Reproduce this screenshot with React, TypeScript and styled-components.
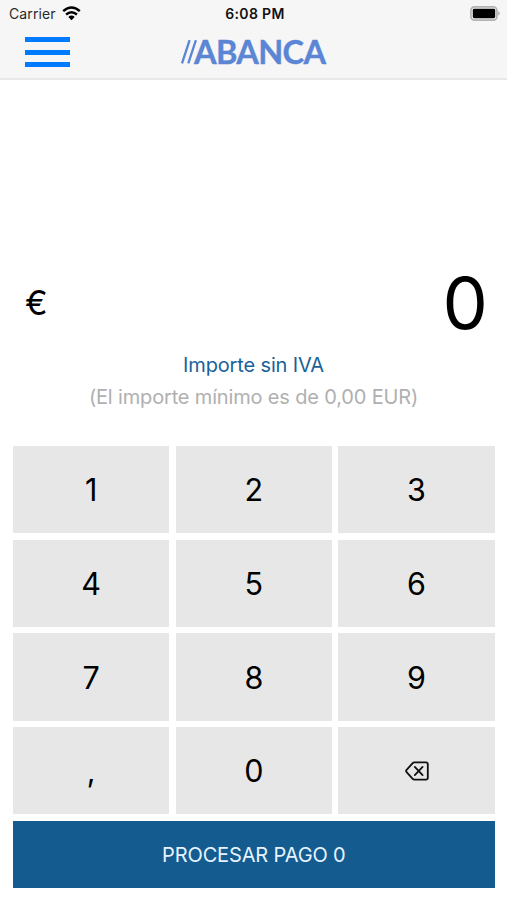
import React from "react";
import styled, { createGlobalStyle } from "styled-components";

const GlobalStyle = createGlobalStyle`
  * { box-sizing: border-box; }
  body { margin: 0; background: #fff; }
  button { font: inherit; border: 0; padding: 0; }
`;

const Screen = styled.main`
  width: 507px;
  height: 900px;
  display: flex;
  flex-direction: column;
  background: #fff;
  color: #000;
  font-family: Inter, "Liberation Sans", sans-serif;
`;

const Header = styled.header`
  height: 80px;
  background: #f6f6f6;
  border-bottom: 2px solid #e8e8e8;
`;

const StatusBar = styled.div`
  height: 27px;
  display: grid;
  grid-template-columns: 1fr auto 1fr;
  align-items: center;
  padding: 0 6px 0 9px;
`;

const Carrier = styled.div`
  display: flex;
  align-items: center;
  gap: 6px;
  font-size: 14px;
  letter-spacing: 0.12px;
  color: #2a2a2a;
`;

const Clock = styled.time`
  font-size: 14px;
  font-weight: 600;
  letter-spacing: 0.35px;
  color: #111;
`;

const BatterySlot = styled.div`
  display: flex;
  justify-content: flex-end;
`;

const NavBar = styled.div`
  height: 51px;
  display: grid;
  grid-template-columns: 1fr auto 1fr;
  align-items: start;
  padding: 10px 25px 0;
`;

const MenuButton = styled.button`
  width: 45px;
  height: 30px;
  display: flex;
  flex-direction: column;
  justify-content: space-between;
  background: none;
`;

const MenuLine = styled.span`
  height: 5px;
  background: #007aff;
`;

const Amount = styled.section`
  height: 270px;
  display: flex;
  align-items: flex-end;
  justify-content: space-between;
  padding: 0 19px 0 25px;
`;

const Currency = styled.span`
  font-size: 34px;
  line-height: 40px;
  margin-bottom: 27px;
`;

const Value = styled.output`
  font-size: 72px;
  line-height: 86px;
  margin-bottom: 4px;
`;

const Notes = styled.section`
  height: 96px;
  margin-top: -1px;
  margin-bottom: 1px;
  text-align: center;
  font-size: 20px;
  line-height: 32px;
`;

const Note = styled.p<{ $color: string; $spacing: string }>`
  margin: 0;
  color: ${(p) => p.$color};
  letter-spacing: ${(p) => p.$spacing};
`;

const Keypad = styled.section`
  display: grid;
  grid-template-columns: repeat(3, 1fr);
  grid-auto-rows: 87.4px;
  gap: 6.3px;
  padding: 0 12.3px 0 13px;
`;

const Key = styled.button`
  display: flex;
  align-items: center;
  justify-content: center;
  background: #e7e7e7;
  color: #000;
  font-size: 30.5px;
`;

const PayButton = styled.button`
  height: 67px;
  margin: 6.3px 12.3px 0 13px;
  padding-top: 1px;
  background: #145c90;
  color: #e6f3ff;
  font-size: 20px;
  letter-spacing: -0.14px;
`;

const WifiIcon = () => (
  <svg width="19" height="15" viewBox="0 0 19 15" fill="none" stroke="#000" strokeWidth="2.5">
    <path d="M1.2 5.1Q9.5-2 17.8 5.1" />
    <path d="M4.1 8.5Q9.5 3.9 14.9 8.5" />
    <path d="M6.3 10.9Q9.5 8.3 12.7 10.9L9.5 14.2Z" fill="#000" stroke="none" />
  </svg>
);

const BatteryIcon = () => (
  <svg width="31" height="15" viewBox="0 0 31 15">
    <rect x=".9" y=".9" width="26" height="13.2" rx="3.6" fill="#f6f6f6" stroke="#b3b3b3" strokeWidth="1.7" />
    <rect x="2.8" y="2.8" width="22.4" height="9.4" rx="1.4" fill="#000" />
    <path d="M28.4 5.3q2.4 2.2 0 4.4z" fill="#999" />
  </svg>
);

const Wordmark = styled.div`
  width: 147px;
  height: 40px;
  margin-top: -5px;
  display: flex;
  align-items: center;
  color: #5b86d5;
  font-family: Lato, sans-serif;
  font-size: 32.5px;
  font-weight: 700;
  line-height: 40px;
  letter-spacing: -0.65px;
  white-space: nowrap;
  -webkit-text-stroke: 0.4px #5b86d5;
`;

const Logo = () => (
  <Wordmark>
    <svg width="14" height="30" viewBox="0 0 14 30" overflow="visible" stroke="#5b86d5" strokeWidth="2.3">
      <path d="M2 26.4 9.6 3.2" />
      <path d="M8.3 26.4 15.9 3.2" />
    </svg>
    ABANCA
  </Wordmark>
);

const BackspaceIcon = () => (
  <svg width="24" height="20" viewBox="0 0 24 20" fill="none" stroke="#111" strokeWidth="1.8" strokeLinecap="round" strokeLinejoin="round">
    <path d="M9.4 1.3H21a1.8 1.8 0 0 1 1.8 1.8V16.9a1.8 1.8 0 0 1-1.8 1.8H9.4a2.4 2.4 0 0 1-1.7-.8L1.6 11.1a1.6 1.6 0 0 1 0-2.2L7.7 2.1a2.4 2.4 0 0 1 1.7-.8Z" />
    <path d="m9.8 5.9 7.8 8.2M17.6 5.9 9.8 14.1" />
  </svg>
);

const digits = ["1", "2", "3", "4", "5", "6", "7", "8", "9", ",", "0"];

export default function App() {
  return (
    <Screen>
      <GlobalStyle />
      <Header>
        <StatusBar>
          <Carrier>
            Carrier
            <WifiIcon />
          </Carrier>
          <Clock>6:08 PM</Clock>
          <BatterySlot>
            <BatteryIcon />
          </BatterySlot>
        </StatusBar>
        <NavBar>
          <MenuButton aria-label="Menú">
            <MenuLine />
            <MenuLine />
            <MenuLine />
          </MenuButton>
          <Logo />
        </NavBar>
      </Header>
      <Amount>
        <Currency>€</Currency>
        <Value>0</Value>
      </Amount>
      <Notes>
        <Note $color="#1b6199" $spacing="-0.14px">Importe sin IVA</Note>
        <Note $color="#b0b0b0" $spacing="-0.16px">(El importe mínimo es de 0,00 EUR)</Note>
      </Notes>
      <Keypad>
        {digits.map((d) => (
          <Key key={d}>{d}</Key>
        ))}
        <Key aria-label="Borrar">
          <BackspaceIcon />
        </Key>
      </Keypad>
      <PayButton>PROCESAR PAGO 0</PayButton>
    </Screen>
  );
}
